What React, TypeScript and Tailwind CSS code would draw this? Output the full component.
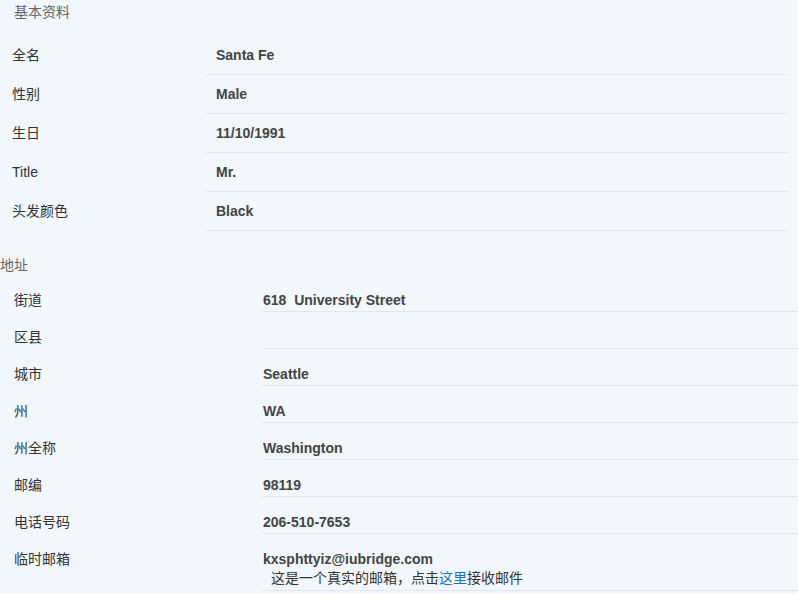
const basic = [
  { label: "全名", value: "Santa Fe" },
  { label: "性别", value: "Male" },
  { label: "生日", value: "11/10/1991" },
  { label: "Title", value: "Mr." },
  { label: "头发颜色", value: "Black" },
];

const address = [
  { label: "街道", value: "618\u00a0 University Street" },
  { label: "区县", value: "" },
  { label: "城市", value: "Seattle" },
  { label: "州", value: "WA" },
  { label: "州全称", value: "Washington" },
  { label: "邮编", value: "98119" },
  { label: "电话号码", value: "206-510-7653" },
];

export default function App() {
  return (
    <div className="w-[798px] h-[594px] overflow-hidden bg-[#f1f7fd] text-[14px] text-[#333] font-['Liberation_Sans','Noto_Sans_CJK_SC',sans-serif]">
      {/* 基本资料 */}
      <section className="mr-[10px]">
        <div className="h-[36px] pt-[2px] pl-[14px] leading-[20px] text-[#666]">基本资料</div>
        <div className="grid grid-cols-[205px_1fr]">
          {basic.map((row) => (
            <div key={row.label} className="contents">
              <div className="h-[39px] flex items-center pl-3">{row.label}</div>
              <div className="h-[39px] flex items-center pl-[11px] font-bold text-[#444] border-b border-[#e4e6ea]">
                {row.value}
              </div>
            </div>
          ))}
        </div>
      </section>

      {/* 地址 */}
      <section className="mt-6">
        <div className="leading-[20px] text-[#666]">地址</div>
        <div className="grid grid-cols-[261px_1fr]">
          {address.map((row) => (
            <div key={row.label} className="contents">
              <div className="pl-[14px] pt-4 leading-[18px]">{row.label}</div>
              <div className="pl-[2px] pt-4 pb-[2px] leading-[18px] min-h-[37px] font-bold text-[#444] border-b border-[#e4e6ea]">
                {row.value}
              </div>
            </div>
          ))}
          <div className="pl-[14px] pt-4 leading-[18px]">临时邮箱</div>
          <div className="pl-[2px] pt-4 pb-[2px] border-b border-[#e4e6ea]">
            <div className="leading-[18px] font-bold text-[#444]">kxsphttyiz@iubridge.com</div>
            <div className="ml-2 leading-[20px] text-[#333]">
              这是一个真实的邮箱，点击<a href="#" className="text-[#1a73c8]">这里</a>接收邮件
            </div>
          </div>
        </div>
      </section>
    </div>
  );
}
